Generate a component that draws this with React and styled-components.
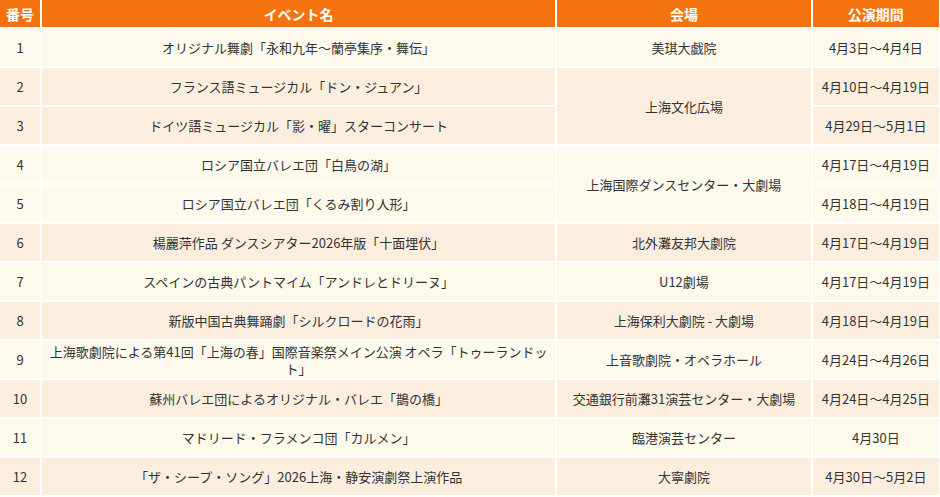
import styled, { createGlobalStyle } from 'styled-components';

const GlobalStyle = createGlobalStyle`
  html, body {
    margin: 0;
    padding: 0;
    background: #fff;
  }
  body {
    font-family: 'Noto Sans CJK JP', 'Noto Sans', sans-serif;
    color: #333;
  }
`;

const CREAM = '#fdf9ec';
const BEIGE = '#fbeedf';

const rows = [
  { no: 1, title: 'オリジナル舞劇「永和九年～蘭亭集序・舞伝」', venue: '美琪大戯院', span: 1, date: '4月3日～4月4日', bg: CREAM },
  { no: 2, title: 'フランス語ミュージカル「ドン・ジュアン」', venue: '上海文化広場', span: 2, date: '4月10日～4月19日', bg: BEIGE },
  { no: 3, title: 'ドイツ語ミュージカル「影・曜」スターコンサート', date: '4月29日～5月1日', bg: BEIGE },
  { no: 4, title: 'ロシア国立バレエ団「白鳥の湖」', venue: '上海国際ダンスセンター・大劇場', span: 2, date: '4月17日～4月19日', bg: CREAM },
  { no: 5, title: 'ロシア国立バレエ団「くるみ割り人形」', date: '4月18日～4月19日', bg: CREAM },
  { no: 6, title: '楊麗萍作品 ダンスシアター2026年版「十面埋伏」', venue: '北外灘友邦大劇院', span: 1, date: '4月17日～4月19日', bg: BEIGE },
  { no: 7, title: 'スペインの古典パントマイム「アンドレとドリーヌ」', venue: 'U12劇場', span: 1, date: '4月17日～4月19日', bg: CREAM },
  { no: 8, title: '新版中国古典舞踊劇「シルクロードの花雨」', venue: '上海保利大劇院 - 大劇場', span: 1, date: '4月18日～4月19日', bg: BEIGE },
  { no: 9, title: '上海歌劇院による第41回「上海の春」国際音楽祭メイン公演 オペラ「トゥーランドット」', venue: '上音歌劇院・オペラホール', span: 1, date: '4月24日～4月26日', bg: CREAM },
  { no: 10, title: '蘇州バレエ団によるオリジナル・バレエ「鵲の橋」', venue: '交通銀行前灘31演芸センター・大劇場', span: 1, date: '4月24日～4月25日', bg: BEIGE },
  { no: 11, title: 'マドリード・フラメンコ団「カルメン」', venue: '臨港演芸センター', span: 1, date: '4月30日', bg: CREAM },
  { no: 12, title: '「ザ・シープ・ソング」2026上海・静安演劇祭上演作品', venue: '大寧劇院', span: 1, date: '4月30日～5月2日', bg: BEIGE },
];

export default function App() {
  return (
    <>
      <GlobalStyle />
      <Table>
        <thead>
          <tr>
            <Th $w={40}>番号</Th>
            <Th $w={512}>イベント名</Th>
            <Th $w={253}>会場</Th>
            <Th $w={126}>公演期間</Th>
          </tr>
        </thead>
        <tbody>
          {rows.map((r) => (
            <Row key={r.no}>
              <Td $bg={r.bg}>{r.no}</Td>
              <Td $bg={r.bg}>{r.title}</Td>
              {r.venue && (
                <Td $bg={r.bg} rowSpan={r.span}>
                  {r.venue}
                </Td>
              )}
              <Td $bg={r.bg}>{r.date}</Td>
            </Row>
          ))}
        </tbody>
      </Table>
    </>
  );
}

const Table = styled.table`
  width: 943px;
  margin: -2px 0 0 -2px;
  table-layout: fixed;
  border-collapse: separate;
  border-spacing: 2px;
  font-size: 13px;
`;

const Th = styled.th`
  width: ${(p) => p.$w}px;
  height: 27px;
  padding: 0;
  background: #f4730e;
  color: #fff;
  font-size: 14px;
  font-weight: 700;
  text-align: center;
  vertical-align: middle;
`;

const Row = styled.tr`
  height: 37px;
`;

const Td = styled.td`
  height: 37px;
  padding: 0 4px;
  background: ${(p) => p.$bg};
  text-align: center;
  vertical-align: middle;
  line-height: 17px;
  color: #333;
`;
